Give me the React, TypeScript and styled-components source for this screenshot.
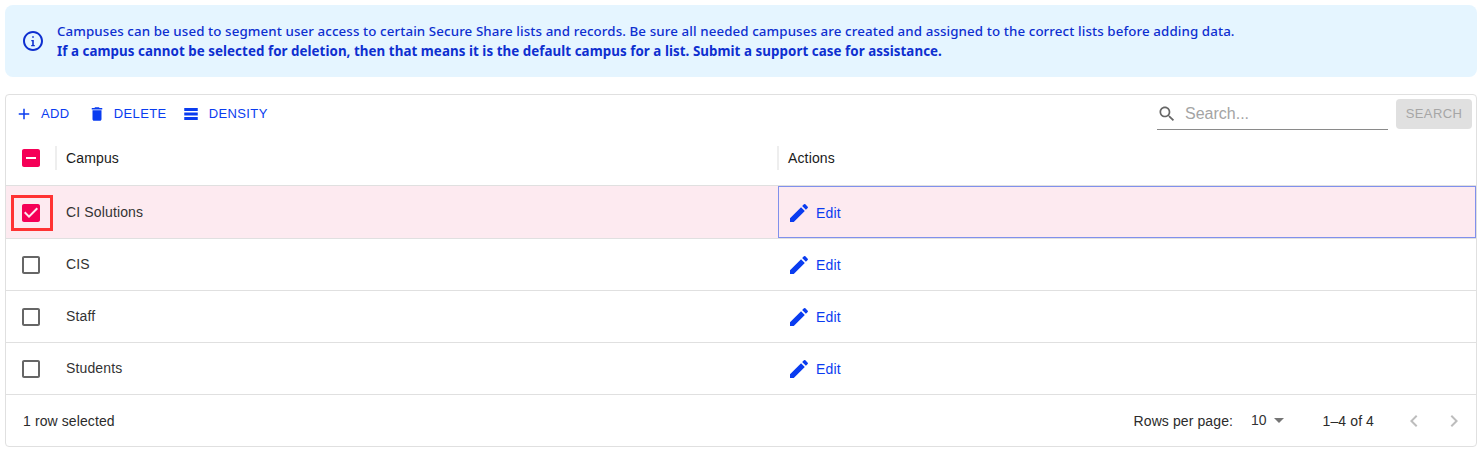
import styled, { createGlobalStyle } from "styled-components";

const blue = "#0a3cf0";
const pink = "#f50057";

const paths = {
  add: "M19 13h-6v6h-2v-6H5v-2h6V5h2v6h6v2z",
  trash: "M6 19c0 1.1.9 2 2 2h8c1.1 0 2-.9 2-2V7H6v12zM19 4h-3.5l-1-1h-5l-1 1H5v2h14V4z",
  density: "M21 8H3V4h18v4zm0 2H3v4h18v-4zm0 6H3v4h18v-4z",
  edit: "M3 17.25V21h3.75L17.81 9.94l-3.75-3.75L3 17.25zM20.71 7.04c.39-.39.39-1.02 0-1.41l-2.34-2.34a.9959.9959 0 0 0-1.41 0l-1.83 1.83 3.75 3.75 1.83-1.83z",
  search: "M15.5 14h-.79l-.28-.27C15.41 12.59 16 11.11 16 9.5 16 5.91 13.09 3 9.5 3S3 5.91 3 9.5 5.91 16 9.5 16c1.61 0 3.09-.59 4.23-1.57l.27.28v.79l5 4.99L20.49 19l-4.99-5zm-6 0C7.01 14 5 11.99 5 9.5S7.01 5 9.5 5 14 7.01 14 9.5 11.99 14 9.5 14z",
  blank: "M19 5v14H5V5h14m0-2H5c-1.1 0-2 .9-2 2v14c0 1.1.9 2 2 2h14c1.1 0 2-.9 2-2V5c0-1.1-.9-2-2-2z",
  checked: "M19 3H5c-1.11 0-2 .9-2 2v14c0 1.1.89 2 2 2h14c1.11 0 2-.9 2-2V5c0-1.1-.89-2-2-2zm-9 14l-5-5 1.41-1.41L10 14.17l7.59-7.59L19 8l-9 9z",
  partial: "M19 3H5c-1.1 0-2 .9-2 2v14c0 1.1.9 2 2 2h14c1.1 0 2-.9 2-2V5c0-1.1-.9-2-2-2zm-2 10H7v-2h10v2z",
  left: "M15.41 7.41L14 6l-6 6 6 6 1.41-1.41L10.83 12z",
  right: "M10 6L8.59 7.41 13.17 12l-4.58 4.59L10 18l6-6z",
  caret: "M7 10l5 5 5-5z",
  info: "M11.2 7.2h1.6v1.6h-1.6zM10.3 11h2.5v5h1v1.2h-3.6V16h1v-3.8h-.9zM12 2C6.48 2 2 6.48 2 12s4.48 10 10 10 10-4.48 10-10S17.52 2 12 2zm0 18c-4.41 0-8-3.59-8-8s3.59-8 8-8 8 3.59 8 8-3.59 8-8 8z",
};

type IconName = keyof typeof paths;

function Icon({ name, size = 24, color = "currentColor" }: { name: IconName; size?: number; color?: string }) {
  return (
    <svg width={size} height={size} viewBox="0 0 24 24" fill={color} style={{ flexShrink: 0, display: "block" }}>
      <path d={paths[name]} />
    </svg>
  );
}

const GlobalStyle = createGlobalStyle`
  html, body { margin: 0; padding: 0; background: #fff; }
  body { font-family: "Liberation Sans", Arial, sans-serif; }
`;

const Page = styled.div`
  width: 1483px;
  height: 452px;
  box-sizing: border-box;
  padding: 5px 6px 5px 5px;
  display: flex;
  flex-direction: column;
  gap: 17px;
  overflow: hidden;
`;

const Alert = styled.div`
  height: 72px;
  box-sizing: border-box;
  background: #e5f5ff;
  border-radius: 8px;
  color: #0e2fd0;
  display: flex;
  align-items: center;
  gap: 12px;
  padding: 0 16px;
  font-family: "Noto Sans", sans-serif;
  font-size: 13.33px;
  line-height: 20px;
`;

const AlertText = styled.div`
  font-weight: 500;
  letter-spacing: 0.1px;
  b { font-weight: 700; display: block; letter-spacing: 0.06px; }
`;

const Card = styled.div`
  position: relative;
  height: 354px;
  box-sizing: border-box;
  border: 1px solid #e0e0e0;
  border-radius: 4px;
  display: flex;
  flex-direction: column;
`;

const Toolbar = styled.div`
  height: 37px;
  box-sizing: border-box;
  display: flex;
  align-items: flex-start;
  padding: 4px 4px 0 4px;
  flex-shrink: 0;
`;

const ToolButton = styled.div<{ $gap?: number; $after?: number }>`
  display: flex;
  align-items: center;
  height: 30px;
  gap: ${(p) => p.$gap ?? 8}px;
  padding: 0 5px;
  margin-right: ${(p) => p.$after ?? 4}px;
  color: ${blue};
  font-size: 13px;
  letter-spacing: 0.4px;
  text-transform: uppercase;
`;

const SearchArea = styled.div`
  margin-left: auto;
  display: flex;
  align-items: flex-start;
  gap: 8px;
`;

const SearchField = styled.div`
  width: 231px;
  height: 31px;
  box-sizing: border-box;
  border-bottom: 1px solid #8a8a8a;
  display: flex;
  align-items: center;
  gap: 8px;
  color: #666;
  font-size: 16px;
  span { color: #a4a4a4; }
`;

const SearchButton = styled.div`
  width: 76px;
  height: 30px;
  background: #e0e0e0;
  color: #a6a6a6;
  border-radius: 4px;
  font-size: 13px;
  letter-spacing: 0.4px;
  display: flex;
  align-items: center;
  justify-content: center;
`;

const Row = styled.div<{ $head?: boolean; $selected?: boolean }>`
  display: grid;
  grid-template-columns: 50px 722px 1fr;
  height: ${(p) => (p.$head ? "54px" : p.$selected ? "53px" : "52px")};
  padding-bottom: ${(p) => (p.$head ? "1px" : "0")};
  flex-shrink: 0;
  box-sizing: border-box;
  border-bottom: 1px solid #e0e0e0;
  background: ${(p) => (p.$selected ? "#fdeaf0" : "transparent")};
  color: ${(p) => (p.$head ? "#1a1a1a" : "#333")};
  font-size: 14px;
  letter-spacing: 0.14px;
`;

const Cell = styled.div`
  display: flex;
  align-items: center;
  padding: 0 10px;
  box-sizing: border-box;
`;

const ActionCell = styled(Cell)<{ $focused?: boolean }>`
  padding: ${(p) => (p.$focused ? "2px" : "1px")} 8px 0;
  border: 1px solid ${(p) => (p.$focused ? "#8090ec" : "transparent")};
`;

const BoxCell = styled(Cell)<{ $body?: boolean }>`
  padding: ${(p) => (p.$body ? "2px" : "0")} 0 0 13px;
`;

const HeadCell = styled(Cell)`
  position: relative;
  &::before {
    content: "";
    position: absolute;
    left: -1px;
    top: 14px;
    bottom: 14px;
    width: 2px;
    background: #eeeeee;
  }
`;

const EditLink = styled.div`
  display: flex;
  align-items: center;
  gap: 5px;
  color: ${blue};
  font-size: 14px;
  letter-spacing: 0.2px;
`;

const Footer = styled.div`
  flex: 1;
  display: flex;
  align-items: center;
  justify-content: space-between;
  padding: 1px 10px 0 17px;
  font-size: 14px;
  letter-spacing: 0.1px;
  color: #2b2b2b;
`;

const Pagination = styled.div`
  display: flex;
  align-items: center;
`;

const PageSize = styled.div`
  display: flex;
  align-items: center;
  margin-left: 18px;
  margin-right: 32px;
  padding-bottom: 2px;
  letter-spacing: 0;
  color: #333;
`;

const Arrows = styled.div`
  display: flex;
  gap: 16px;
  margin-left: 28px;
  color: #bdbdbd;
`;

const Highlight = styled.div`
  position: absolute;
  left: 5px;
  top: 100px;
  width: 42px;
  height: 36px;
  box-sizing: border-box;
  border: 3px solid #ff3333;
  pointer-events: none;
`;

const rows = ["CI Solutions", "CIS", "Staff", "Students"];

export default function App() {
  return (
    <>
      <GlobalStyle />
      <Page>
        <Alert>
          <Icon name="info" size={24} color="#0e2fd0" />
          <AlertText>
            Campuses can be used to segment user access to certain Secure Share lists and records. Be sure all needed campuses are created and assigned to the correct lists before adding data.
            <b>If a campus cannot be selected for deletion, then that means it is the default campus for a list. Submit a support case for assistance.</b>
          </AlertText>
        </Alert>
        <Card>
          <Toolbar>
            <ToolButton $after={8}><Icon name="add" size={18} />Add</ToolButton>
            <ToolButton $after={5}><Icon name="trash" size={18} />Delete</ToolButton>
            <ToolButton $gap={9}><Icon name="density" size={18} />Density</ToolButton>
            <SearchArea>
              <SearchField><Icon name="search" size={20} /><span>Search...</span></SearchField>
              <SearchButton>SEARCH</SearchButton>
            </SearchArea>
          </Toolbar>
          <Row $head>
            <BoxCell><Icon name="partial" color={pink} /></BoxCell>
            <HeadCell>Campus</HeadCell>
            <HeadCell>Actions</HeadCell>
          </Row>
          {rows.map((name, i) => (
            <Row key={name} $selected={i === 0}>
              <BoxCell $body>
                {i === 0 ? <Icon name="checked" color={pink} /> : <Icon name="blank" color="#666" />}
              </BoxCell>
              <Cell>{name}</Cell>
              <ActionCell $focused={i === 0}>
                <EditLink><Icon name="edit" />Edit</EditLink>
              </ActionCell>
            </Row>
          ))}
          <Footer>
            <span>1 row selected</span>
            <Pagination>
              <span>Rows per page:</span>
              <PageSize>10<Icon name="caret" color="#757575" /></PageSize>
              <span>1–4 of 4</span>
              <Arrows>
                <Icon name="left" />
                <Icon name="right" />
              </Arrows>
            </Pagination>
          </Footer>
          <Highlight />
        </Card>
      </Page>
    </>
  );
}
